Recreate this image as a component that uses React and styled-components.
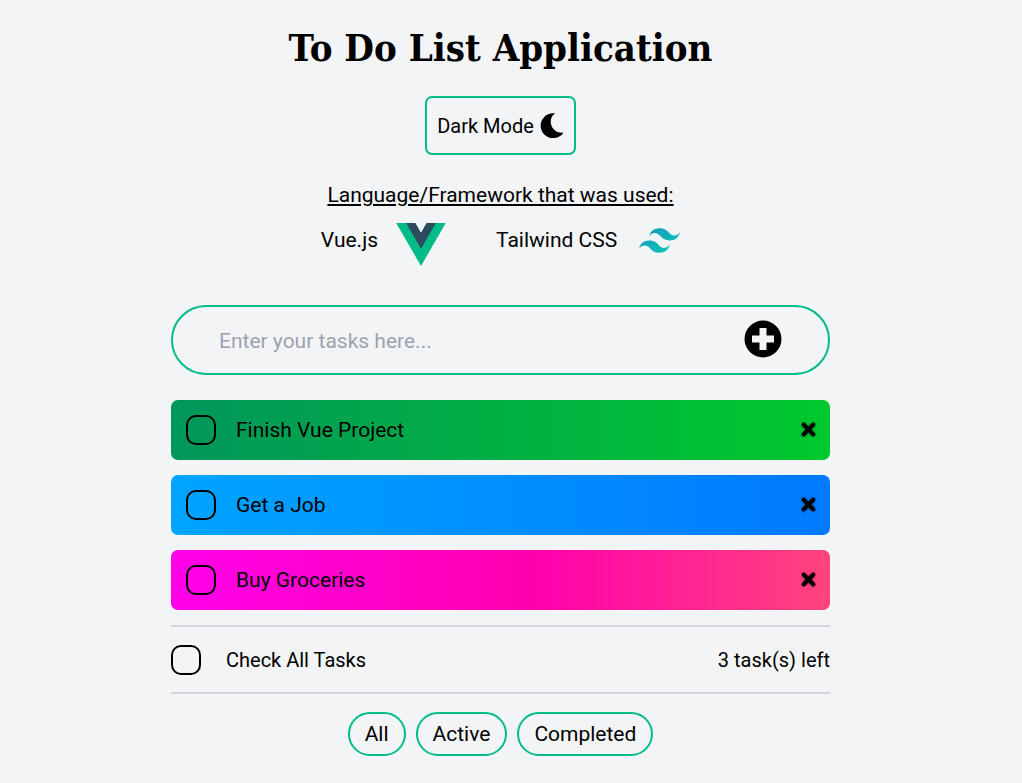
import React, { useState } from "react";
import styled, { createGlobalStyle } from "styled-components";

const accent = "#00bc87";

const GlobalStyle = createGlobalStyle`
  *, *::before, *::after { box-sizing: border-box; }
  body {
    margin: 0;
    background: #f3f4f6;
    color: #000;
    font-family: Roboto, "Liberation Sans", sans-serif;
    font-size: 21px;
    line-height: 30px;
  }
  button, input { font: inherit; color: inherit; }
`;

const Page = styled.div`
  display: flex;
  flex-direction: column;
  align-items: center;
  padding: 24px 21px 27px 0;
`;

const Title = styled.h1`
  margin: 0;
  font-family: "DejaVu Serif Condensed", "DejaVu Serif", serif;
  font-size: 38px;
  font-weight: 700;
  line-height: 48px;
`;

const ModeButton = styled.button`
  display: flex;
  align-items: center;
  gap: 6px;
  height: 59px;
  margin-top: 24px;
  padding: 0 10px;
  border: 2px solid ${accent};
  border-radius: 7px;
  background: transparent;
  font-size: 20px;
  cursor: pointer;
`;

const Subtitle = styled.p`
  margin: 25px 0 0;
  text-decoration: underline;
`;

const Stack = styled.ul`
  display: flex;
  gap: 50px;
  margin: 13px 0 0;
  padding: 0;
  list-style: none;
  line-height: 34px;
`;

const StackItem = styled.li`
  display: flex;
  align-items: flex-start;
  gap: ${(p) => p.$gap}px;
  height: 44px;

  svg { display: block; margin-top: ${(p) => p.$drop}px; }
`;

const Main = styled.main`
  width: 100%;
  max-width: 659px;
  margin-top: 38px;
`;

const EntryForm = styled.form`
  display: flex;
  align-items: center;
  height: 70px;
  padding: 0 46px;
  border: 2px solid ${accent};
  border-radius: 35px;
`;

const EntryInput = styled.input`
  flex: 1;
  min-width: 0;
  padding: 2px 0 0;
  border: 0;
  outline: 0;
  background: transparent;

  &::placeholder { color: #9ca3af; opacity: 1; }
`;

const IconButton = styled.button`
  display: flex;
  padding: 0 0 2px;
  border: 0;
  background: transparent;
  cursor: pointer;

  svg { display: block; }
`;

const TaskList = styled.ul`
  display: grid;
  gap: 15px;
  margin: 25px 0 15px;
  padding: 0;
  list-style: none;
`;

const Task = styled.li`
  display: flex;
  align-items: center;
  justify-content: space-between;
  height: 60px;
  padding: 0 14px 0 15px;
  border-radius: 7px;
  background: ${(p) => p.$fill};
`;

const CheckLabel = styled.label`
  display: flex;
  align-items: center;
  gap: ${(p) => p.$gap}px;
  cursor: pointer;
`;

const Checkbox = styled.input`
  appearance: none;
  width: 30px;
  height: 30px;
  margin: 0;
  border: 2px solid #000;
  border-radius: 10px;
  background: transparent;
  cursor: pointer;

  &:checked { background: #000; }
`;

const CrossIcon = styled.svg`
  overflow: visible;
  filter: drop-shadow(0 0 1px rgba(0, 0, 0, 0.7));
`;

const Summary = styled.div`
  display: flex;
  align-items: center;
  justify-content: space-between;
  height: 69px;
  border-top: 2px solid #d1d5db;
  border-bottom: 2px solid #d1d5db;
  font-size: 20px;
`;

const Filters = styled.div`
  display: flex;
  justify-content: center;
  gap: 10px;
  margin-top: 18px;
`;

const FilterButton = styled.button`
  height: 44px;
  padding: 0 15px;
  border: 2px solid ${accent};
  border-radius: 22px;
  background: transparent;
  cursor: pointer;
`;

function Moon() {
  return (
    <svg width="24" height="26" viewBox="0 0 24 26" aria-hidden="true">
      <path d="M15 .5C9.5 4 9.5 12 14 16.5c2.5 2.5 6 3.7 9.5 3.2C21 23.5 17 25 13 25A12.3 12.3 0 0 1 13 .3c.7-.1 1.4 0 2 .2z" />
    </svg>
  );
}

function PlusCircle() {
  return (
    <svg width="38" height="38" viewBox="0 0 38 38" aria-hidden="true">
      <path
        fillRule="evenodd"
        d="M19 .5a18.5 18.5 0 1 1 0 37a18.5 18.5 0 1 1 0-37zM15.5 8v7.5H8v7h7.5V30h7v-7.5H30v-7h-7.5V8z"
      />
    </svg>
  );
}

function Cross() {
  return (
    <CrossIcon width="15" height="15" viewBox="0 0 15 15" aria-hidden="true">
      <path d="M2.7 2.7l9.6 9.6M12.3 2.7l-9.6 9.6" stroke="#000" strokeWidth="4" strokeLinecap="round" />
    </CrossIcon>
  );
}

function VueLogo() {
  return (
    <svg width="50" height="43" viewBox="0 0 262 227" aria-hidden="true">
      <path fill="#00bc87" d="M161.1 0l-30.2 52.4L100.6 0H0l130.9 226.7L261.7 0z" />
      <path fill="#2c4a60" d="M161.1 0l-30.2 52.4L100.6 0H52.3l78.6 136L209.4 0z" />
    </svg>
  );
}

function TailwindLogo() {
  return (
    <svg width="41" height="25" viewBox="0 0 54 32.4" aria-hidden="true">
      <defs>
        <linearGradient id="wave" x1="0" y1="0" x2="1" y2="1">
          <stop offset="0" stopColor="#1693b5" />
          <stop offset="1" stopColor="#0cd0be" />
        </linearGradient>
      </defs>
      <path
        fill="url(#wave)"
        d="M27 0c-7.2 0-11.7 3.6-13.5 10.8 2.7-3.6 5.85-4.95 9.45-4.05 2.054.513 3.522 2.004 5.147 3.653C30.744 13.09 33.808 16.2 40.5 16.2c7.2 0 11.7-3.6 13.5-10.8-2.7 3.6-5.85 4.95-9.45 4.05-2.054-.513-3.522-2.004-5.147-3.653C36.756 3.11 33.692 0 27 0zM13.5 16.2C6.3 16.2 1.8 19.8 0 27c2.7-3.6 5.85-4.95 9.45-4.05 2.054.514 3.522 2.004 5.147 3.653C17.244 29.29 20.308 32.4 27 32.4c7.2 0 11.7-3.6 13.5-10.8-2.7 3.6-5.85 4.95-9.45 4.05-2.054-.513-3.522-2.004-5.147-3.653C23.256 19.31 20.192 16.2 13.5 16.2z"
      />
    </svg>
  );
}

const initialTasks = [
  { id: 1, name: "Finish Vue Project", done: false, fill: "linear-gradient(to right, #00965a, #00c92c)" },
  { id: 2, name: "Get a Job", done: false, fill: "linear-gradient(to right, #00a4ff, #007aff)" },
  { id: 3, name: "Buy Groceries", done: false, fill: "linear-gradient(to right, #ff00ea, #ff00ae 55%, #ff457a)" },
];

const filters = {
  All: () => true,
  Active: (t) => !t.done,
  Completed: (t) => t.done,
};

export default function App() {
  const [tasks, setTasks] = useState(initialTasks);
  const [filter, setFilter] = useState("All");
  const [draft, setDraft] = useState("");
  const left = tasks.filter((t) => !t.done).length;

  const addTask = (e) => {
    e.preventDefault();
    if (!draft.trim()) return;
    const fill = initialTasks[tasks.length % 3].fill;
    setTasks([...tasks, { id: Date.now(), name: draft.trim(), done: false, fill }]);
    setDraft("");
  };
  const toggle = (id) => setTasks(tasks.map((t) => (t.id === id ? { ...t, done: !t.done } : t)));

  return (
    <>
      <GlobalStyle />
      <Page>
        <Title>To Do List Application</Title>
        <ModeButton type="button">
          Dark Mode <Moon />
        </ModeButton>
        <Subtitle>Language/Framework that was used:</Subtitle>
        <Stack>
          <StackItem $gap={18} $drop={0}>
            Vue.js <VueLogo />
          </StackItem>
          <StackItem $gap={22} $drop={5}>
            Tailwind CSS <TailwindLogo />
          </StackItem>
        </Stack>
        <Main>
          <EntryForm onSubmit={addTask}>
            <EntryInput
              aria-label="New task"
              placeholder="Enter your tasks here..."
              value={draft}
              onChange={(e) => setDraft(e.target.value)}
            />
            <IconButton type="submit" aria-label="Add task">
              <PlusCircle />
            </IconButton>
          </EntryForm>
          <TaskList>
            {tasks.filter(filters[filter]).map((t) => (
              <Task key={t.id} $fill={t.fill}>
                <CheckLabel $gap={20}>
                  <Checkbox type="checkbox" checked={t.done} onChange={() => toggle(t.id)} />
                  {t.name}
                </CheckLabel>
                <IconButton
                  type="button"
                  aria-label={`Remove ${t.name}`}
                  onClick={() => setTasks(tasks.filter((o) => o.id !== t.id))}
                >
                  <Cross />
                </IconButton>
              </Task>
            ))}
          </TaskList>
          <Summary>
            <CheckLabel $gap={25}>
              <Checkbox
                type="checkbox"
                checked={tasks.length > 0 && left === 0}
                onChange={(e) => setTasks(tasks.map((t) => ({ ...t, done: e.target.checked })))}
              />
              Check All Tasks
            </CheckLabel>
            <span>{left} task(s) left</span>
          </Summary>
          <Filters>
            {Object.keys(filters).map((name) => (
              <FilterButton key={name} type="button" onClick={() => setFilter(name)}>
                {name}
              </FilterButton>
            ))}
          </Filters>
        </Main>
      </Page>
    </>
  );
}
